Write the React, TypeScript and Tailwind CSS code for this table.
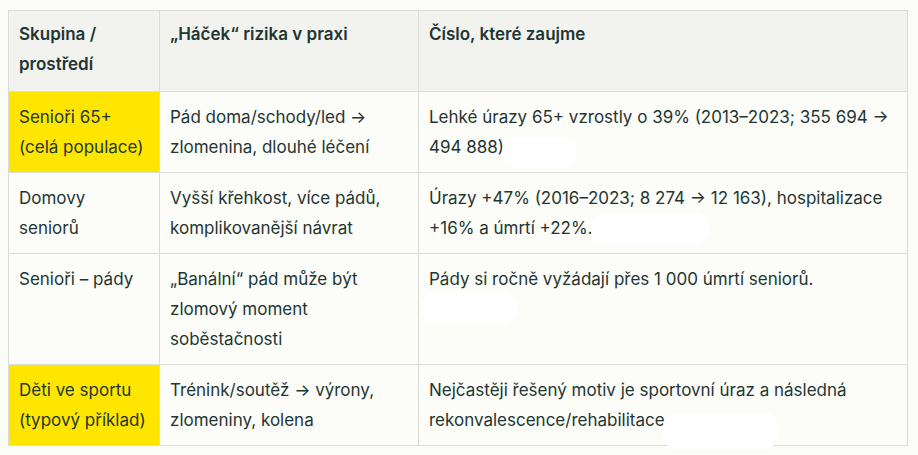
import React from "react";

const Blob = ({ w, h, dy = 0, dx = 0 }: { w: number; h: number; dy?: number; dx?: number }) => (
  <span className="relative inline-block h-[1px]" style={{ width: w - 10 }}>
    <span
      className="absolute rounded-[14px] bg-white"
      style={{ width: w, height: h, left: dx, top: dy }}
    />
  </span>
);

export default function App() {
  const td = "border border-[#dcdcd7] px-[10px] pt-[10px] pb-[10px] align-top";
  const th = "border border-[#dcdcd7] px-[10px] pt-[8px] pb-[10px] align-top text-left font-semibold";
  return (
    <div
      className="w-[918px] h-[455px] bg-[#fbfbf8] pt-[10px] pl-[8px] text-[#1f3632] text-[17px] leading-[30px]"
      style={{ fontFamily: "Inter, 'Noto Sans', sans-serif" }}
    >
      <table className="border-collapse table-fixed w-[899px]">
        <colgroup>
          <col className="w-[151px]" />
          <col className="w-[259px]" />
          <col className="w-[489px]" />
        </colgroup>
        <thead>
          <tr className="bg-[#f2f2ef] h-[81px]">
            <th className={th}>Skupina / prostředí</th>
            <th className={th}>„Háček“ rizika v praxi</th>
            <th className={th}>Číslo, které zaujme</th>
          </tr>
        </thead>
        <tbody className="bg-[#fcfcf9]">
          <tr className="h-[81px]">
            <td className={`${td} bg-[#ffe600]`}>Senioři 65+ (celá populace)</td>
            <td className={td}>Pád doma/schody/led → zlomenina, dlouhé léčení</td>
            <td className={td}>
              Lehké úrazy 65+ vzrostly o 39% (2013–2023; 355 694 → 494 888)
              <Blob w={74} h={30} dx={-2} dy={-14} />
            </td>
          </tr>
          <tr className="h-[81px]">
            <td className={td}>Domovy seniorů</td>
            <td className={td}>Vyšší křehkost, více pádů, komplikovanější návrat</td>
            <td className={td}>
              Úrazy +47% (2016–2023; 8 274 → 12 163), hospitalizace +16% a úmrtí +22%.
              <Blob w={118} h={32} dx={-2} dy={-20} />
            </td>
          </tr>
          <tr className="h-[111px]">
            <td className={td}>Senioři – pády</td>
            <td className={td}>„Banální“ pád může být zlomový moment soběstačnosti</td>
            <td className={td}>
              Pády si ročně vyžádají přes 1 000 úmrtí seniorů.
              <div className="h-[32px] w-[96px] rounded-[14px] bg-white ml-[-8px] mt-[-2px]" />
            </td>
          </tr>
          <tr className="h-[81px]">
            <td className={`${td} bg-[#ffe600]`}>Děti ve sportu (typový příklad)</td>
            <td className={td}>Trénink/soutěž → výrony, zlomeniny, kolena</td>
            <td className={td}>
              Nejčastěji řešený motiv je sportovní úraz a následná rekonvalescence/rehabilitace
              <Blob w={115} h={36} dx={-2} dy={-12} />
            </td>
          </tr>
        </tbody>
      </table>
    </div>
  );
}
